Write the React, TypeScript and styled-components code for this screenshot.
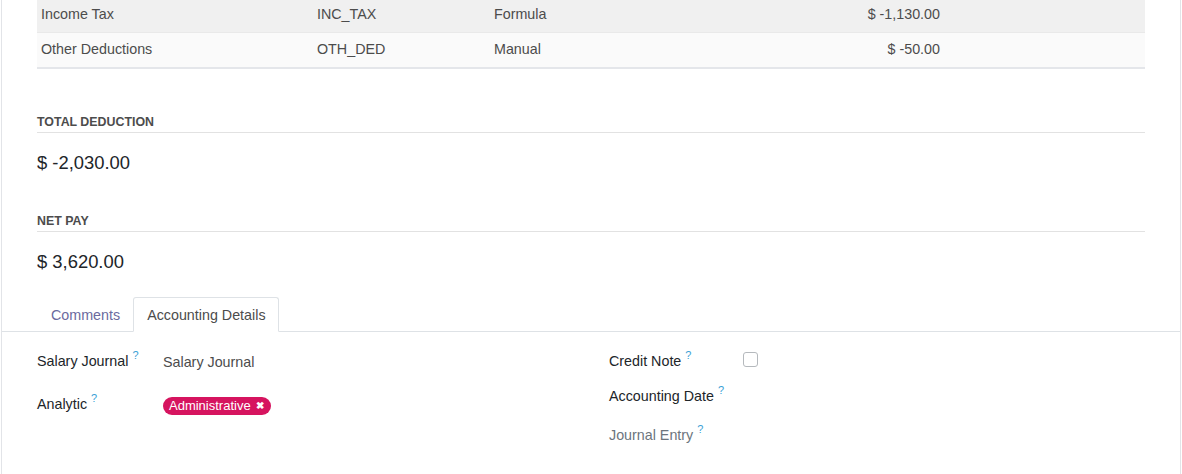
import React from "react";
import styled, { createGlobalStyle } from "styled-components";

const GlobalStyle = createGlobalStyle`
  body {
    margin: 0;
    background: #ffffff;
    font-family: "Liberation Sans", Arial, sans-serif;
    font-size: 14.3px;
    color: #4c4c4c;
  }
`;

const Sheet = styled.div`
  margin-left: 1px;
  width: 1178px;
  height: 474px;
  border-left: 1px solid #e2e4e8;
  border-right: 1px solid #e2e4e8;
  overflow: hidden;
`;

const Inner = styled.div`
  padding: 0 35px;
`;

const Table = styled.div`
  border-bottom: 2px solid #e4e6ea;
`;

const Row = styled.div<{ $bg: string; $h: number; $shift: number }>`
  display: grid;
  grid-template-columns: 276px 177px 210px 244px 1fr;
  align-items: center;
  height: ${(p) => p.$h}px;
  background: ${(p) => p.$bg};
  & + & {
    border-top: 1px solid #e9e9e9;
  }
  & > div {
    margin-top: ${(p) => p.$shift}px;
  }
`;

const Cell = styled.div<{ $right?: boolean }>`
  padding: 0 4px;
  text-align: ${(p) => (p.$right ? "right" : "left")};
  white-space: nowrap;
  line-height: 20px;
`;

const Section = styled.div<{ $top: number }>`
  margin-top: ${(p) => p.$top}px;
`;

const SectionTitle = styled.div`
  font-size: 12.4px;
  font-weight: 700;
  line-height: 16px;
  text-transform: uppercase;
  color: #4c4c4c;
  padding-bottom: 2px;
  border-bottom: 1px solid #e2e2e2;
`;

const Amount = styled.div`
  margin-top: 18px;
  font-size: 18.4px;
  line-height: 24px;
  color: #212529;
`;

const TabNav = styled.div`
  margin-top: 23px;
  display: flex;
  padding-left: 35px;
  border-bottom: 1px solid #dee2e6;
`;

const Tab = styled.div<{ $active?: boolean }>`
  height: 35px;
  box-sizing: border-box;
  padding: 0 12px 0 13px;
  display: flex;
  align-items: center;
  margin-bottom: -1px;
  border: 1px solid ${(p) => (p.$active ? "#dee2e6" : "transparent")};
  border-bottom-color: ${(p) => (p.$active ? "#ffffff" : "transparent")};
  border-radius: 3px 3px 0 0;
  background: ${(p) => (p.$active ? "#ffffff" : "transparent")};
  color: ${(p) => (p.$active ? "#4c4c4c" : "#6b6a9e")};
`;

const FormGrid = styled.div`
  display: grid;
  grid-template-columns: 1fr 1fr;
  column-gap: 36px;
  padding: 19px 35px 0;
`;

const Group = styled.div`
  display: flex;
  flex-direction: column;
`;

const FieldRow = styled.div<{ $label: number; $h: number }>`
  display: grid;
  grid-template-columns: ${(p) => p.$label}px 1fr;
  align-items: start;
  height: ${(p) => p.$h}px;
`;

const Label = styled.div<{ $muted?: boolean }>`
  line-height: 20px;
  color: ${(p) => (p.$muted ? "#6c757d" : "#212529")};
  white-space: nowrap;
`;

const Help = styled.sup`
  font-size: 11px;
  color: #3ba1d6;
  margin-left: 4px;
  vertical-align: top;
  position: relative;
  top: -6px;
`;

const Value = styled.div`
  line-height: 20px;
  padding-top: 1px;
  color: #4c4c4c;
`;

const Tag = styled.span`
  display: inline-flex;
  align-items: center;
  gap: 5px;
  height: 18px;
  margin-top: 3px;
  padding: 0 7px 0 6px;
  border-radius: 9px;
  background: #d6145f;
  color: #ffffff;
  font-size: 13px;
  line-height: 18px;
`;

const TagClose = styled.span`
  font-size: 10px;
  font-weight: 700;
`;

const Checkbox = styled.span`
  display: block;
  width: 13px;
  height: 13px;
  margin-top: 1px;
  border: 1px solid #b5b9bd;
  border-radius: 3px;
  background: #ffffff;
`;

const lines = [
  { name: "Income Tax", code: "INC_TAX", kind: "Formula", amount: "$ -1,130.00", bg: "#f0f0f0", h: 32, shift: -4 },
  { name: "Other Deductions", code: "OTH_DED", kind: "Manual", amount: "$ -50.00", bg: "#fafafa", h: 34, shift: -3 },
];

export default function App() {
  return (
    <>
      <GlobalStyle />
      <Sheet>
        <Inner>
          <Table>
            {lines.map((l) => (
              <Row key={l.code} $bg={l.bg} $h={l.h} $shift={l.shift}>
                <Cell>{l.name}</Cell>
                <Cell>{l.code}</Cell>
                <Cell>{l.kind}</Cell>
                <Cell $right>{l.amount}</Cell>
                <Cell />
              </Row>
            ))}
          </Table>

          <Section $top={45}>
            <SectionTitle>Total Deduction</SectionTitle>
            <Amount>$ -2,030.00</Amount>
          </Section>

          <Section $top={38}>
            <SectionTitle>Net Pay</SectionTitle>
            <Amount>$ 3,620.00</Amount>
          </Section>
        </Inner>

        <TabNav>
          <Tab>Comments</Tab>
          <Tab $active>Accounting Details</Tab>
        </TabNav>

        <FormGrid>
          <Group>
            <FieldRow $label={126} $h={43}>
              <Label>
                Salary Journal<Help>?</Help>
              </Label>
              <Value>Salary Journal</Value>
            </FieldRow>
            <FieldRow $label={126} $h={40}>
              <Label>
                Analytic<Help>?</Help>
              </Label>
              <div>
                <Tag>
                  Administrative<TagClose>✖</TagClose>
                </Tag>
              </div>
            </FieldRow>
          </Group>
          <Group>
            <FieldRow $label={134} $h={35}>
              <Label>
                Credit Note<Help>?</Help>
              </Label>
              <div>
                <Checkbox />
              </div>
            </FieldRow>
            <FieldRow $label={134} $h={39}>
              <Label>
                Accounting Date<Help>?</Help>
              </Label>
              <div />
            </FieldRow>
            <FieldRow $label={134} $h={30}>
              <Label $muted>
                Journal Entry<Help>?</Help>
              </Label>
              <div />
            </FieldRow>
          </Group>
        </FormGrid>
      </Sheet>
    </>
  );
}
